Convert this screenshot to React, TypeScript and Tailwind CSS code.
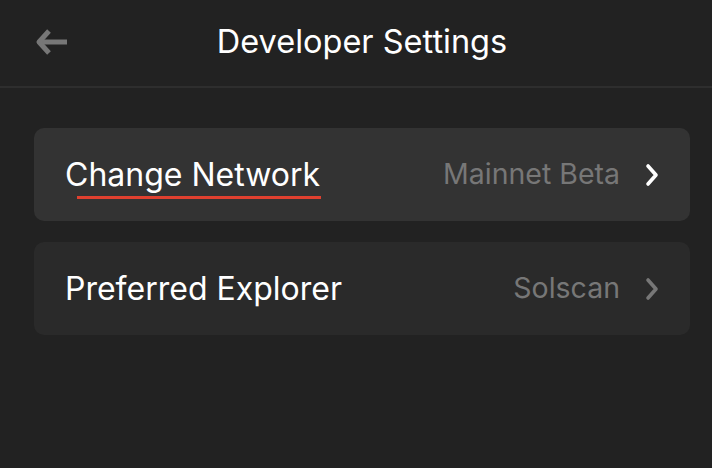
import React from "react";

function Chevron({ color }: { color: string }) {
  return (
    <svg width="14" height="24" viewBox="0 0 14 24" fill="none">
      <path d="M3 3 L11 12 L3 21" stroke={color} strokeWidth="3.6" strokeLinecap="round" strokeLinejoin="round" />
    </svg>
  );
}

export default function App() {
  return (
    <div className="w-[712px] h-[468px] bg-[#222222] flex flex-col" style={{ fontFamily: "Inter, 'Noto Sans', sans-serif" }}>
      <div className="h-[88px] flex items-center relative border-b-2 border-[#2e2e2e]">
        <div className="absolute left-[34px] top-[26px]">
          <svg width="36" height="32" viewBox="0 0 36 32" fill="none">
            <path d="M33 16 H6" stroke="#777777" strokeWidth="5" strokeLinecap="butt" />
            <path d="M15 5 L5 16 L15 27" stroke="#777777" strokeWidth="5" strokeLinecap="butt" strokeLinejoin="round" />
          </svg>
        </div>
        <div className="flex-1 text-center text-white text-[32.5px] leading-none pb-[2px] pl-[12px]">Developer Settings</div>
      </div>
      <div className="flex flex-col gap-[21px] pl-[34px] pr-[22px] pt-[40px]">
        <div className="h-[93px] rounded-[10px] bg-[#333333] flex items-center pl-[31px] pr-[31px]">
          <span className="relative text-white text-[32px] leading-none">
            Change Network
            <span className="absolute left-[12px] right-[-1px] top-[37px] h-[3px] bg-[#e0402f]" />
          </span>
          <span className="ml-auto text-[#777777] text-[28.5px] leading-none mr-[25px]">Mainnet Beta</span>
          <Chevron color="#ffffff" />
        </div>
        <div className="h-[93px] rounded-[10px] bg-[#2a2a2a] flex items-center pl-[31px] pr-[31px]">
          <span className="text-white text-[32px] leading-none">Preferred Explorer</span>
          <span className="ml-auto text-[#777777] text-[28.5px] leading-none mr-[25px]">Solscan</span>
          <Chevron color="#777777" />
        </div>
      </div>
    </div>
  );
}
